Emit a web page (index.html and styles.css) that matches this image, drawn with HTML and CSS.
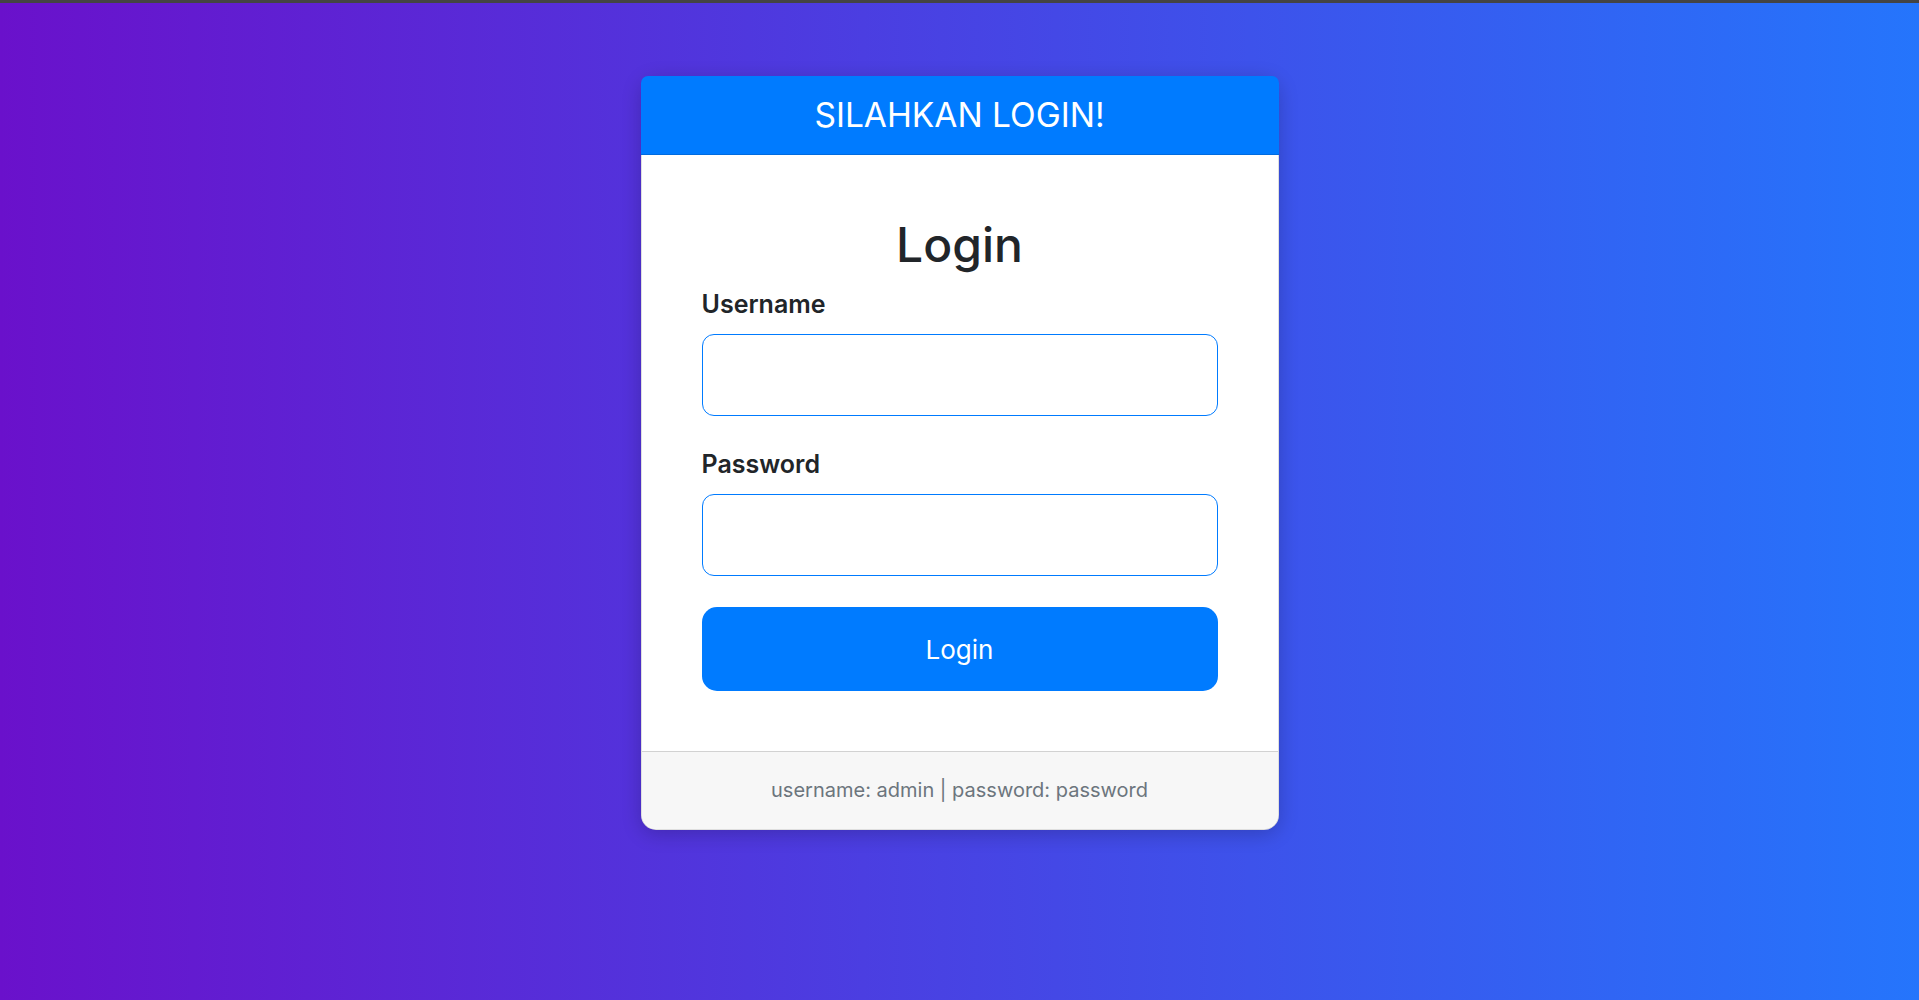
FILE: index.html
```html
<!DOCTYPE html>
<html lang="id">
<head>
<meta charset="utf-8">
<title>Login</title>
<link rel="stylesheet" href="styles.css">
</head>
<body>
<div class="page">
  <div class="card">
    <div class="card-header">SILAHKAN LOGIN!</div>
    <div class="card-body">
      <h2 class="title">Login</h2>
      <form class="form">
        <div class="group">
          <label class="label" for="username">Username</label>
          <input class="input" id="username" type="text">
        </div>
        <div class="group">
          <label class="label" for="password">Password</label>
          <input class="input" id="password" type="password">
        </div>
        <button class="btn" type="button">Login</button>
      </form>
    </div>
    <div class="card-footer">username: admin | password: password</div>
  </div>
</div>
</body>
</html>
```
FILE: styles.css
```css
* { box-sizing: border-box; }
html, body { margin: 0; padding: 0; }
body {
  min-height: 100vh;
  border-top: 3px solid #444;
  background: linear-gradient(to right, #6a11cb, #2575fc);
  font-family: Inter, "Noto Sans", sans-serif;
  color: #212529;
}
.page {
  display: flex;
  justify-content: center;
  padding-top: 73px;
}
.card {
  width: 638px;
  background: #fff;
  border: 1px solid rgba(0,0,0,0.125);
  border-radius: 15px;
  box-shadow: 0 4px 20px rgba(0,0,0,0.2);
}
.card-header {
  background: #007bff;
  color: #fff;
  text-align: center;
  font-size: 33.5px;
  line-height: 48px;
  padding: 15px 20px;
  border-bottom: 1px solid rgba(0,0,0,0.125);
  border-radius: 7px 7px 0 0;
  margin: -1px -1px 0 -1px;
}
.card-body {
  padding: 60px;
}
.title {
  margin: 0 0 11px;
  text-align: center;
  font-size: 48px;
  font-weight: 500;
  line-height: 60px;
}
.form { display: flex; flex-direction: column; }
.group { display: flex; flex-direction: column; margin-bottom: 30px; }
.group + .group { margin-bottom: 31px; }
.label {
  font-size: 25px;
  font-weight: 600;
  line-height: 36px;
  margin-bottom: 12px;
}
.input {
  height: 82px;
  border: 1px solid #007bff;
  border-radius: 12px;
  font-size: 20px;
  padding: 0 20px;
  background: #fff;
  outline: none;
}
.btn {
  height: 84px;
  border: none;
  border-radius: 15px;
  background: #007bff;
  color: #fff;
  font-family: Inter, "Noto Sans", sans-serif;
  font-size: 26px;
  cursor: pointer;
}
.card-footer {
  background: #f7f7f7;
  border-top: 1px solid rgba(0,0,0,0.15);
  border-radius: 0 0 15px 15px;
  text-align: center;
  color: #6c757d;
  font-size: 20px;
  line-height: 29px;
  padding: 24px 20px;
}
```
